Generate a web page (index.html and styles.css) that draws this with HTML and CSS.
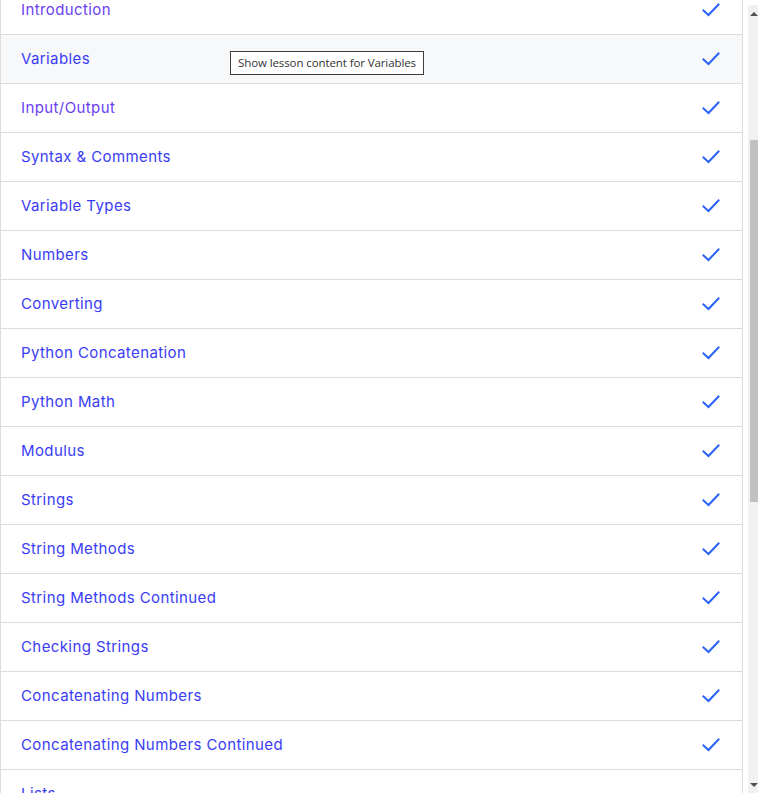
FILE: index.html
```html
<!DOCTYPE html>
<html>
<head>
<meta charset="utf-8">
<link rel="stylesheet" href="styles.css">
</head>
<body>
<div class="frame">
  <ul class="lessons">
    <li class="row"><a class="link visited" href="#">Introduction</a><svg class="check" viewBox="0 0 18 14"><path d="M1.5 7.5 L6.5 12 L16.5 1.5"/></svg></li>
    <li class="row hover"><a class="link" href="#">Variables</a><svg class="check" viewBox="0 0 18 14"><path d="M1.5 7.5 L6.5 12 L16.5 1.5"/></svg><span class="tooltip">Show lesson content for Variables</span></li>
    <li class="row"><a class="link visited" href="#">Input/Output</a><svg class="check" viewBox="0 0 18 14"><path d="M1.5 7.5 L6.5 12 L16.5 1.5"/></svg></li>
    <li class="row"><a class="link" href="#">Syntax &amp; Comments</a><svg class="check" viewBox="0 0 18 14"><path d="M1.5 7.5 L6.5 12 L16.5 1.5"/></svg></li>
    <li class="row"><a class="link" href="#">Variable Types</a><svg class="check" viewBox="0 0 18 14"><path d="M1.5 7.5 L6.5 12 L16.5 1.5"/></svg></li>
    <li class="row"><a class="link" href="#">Numbers</a><svg class="check" viewBox="0 0 18 14"><path d="M1.5 7.5 L6.5 12 L16.5 1.5"/></svg></li>
    <li class="row"><a class="link" href="#">Converting</a><svg class="check" viewBox="0 0 18 14"><path d="M1.5 7.5 L6.5 12 L16.5 1.5"/></svg></li>
    <li class="row"><a class="link" href="#">Python Concatenation</a><svg class="check" viewBox="0 0 18 14"><path d="M1.5 7.5 L6.5 12 L16.5 1.5"/></svg></li>
    <li class="row"><a class="link" href="#">Python Math</a><svg class="check" viewBox="0 0 18 14"><path d="M1.5 7.5 L6.5 12 L16.5 1.5"/></svg></li>
    <li class="row"><a class="link" href="#">Modulus</a><svg class="check" viewBox="0 0 18 14"><path d="M1.5 7.5 L6.5 12 L16.5 1.5"/></svg></li>
    <li class="row"><a class="link" href="#">Strings</a><svg class="check" viewBox="0 0 18 14"><path d="M1.5 7.5 L6.5 12 L16.5 1.5"/></svg></li>
    <li class="row"><a class="link" href="#">String Methods</a><svg class="check" viewBox="0 0 18 14"><path d="M1.5 7.5 L6.5 12 L16.5 1.5"/></svg></li>
    <li class="row"><a class="link" href="#">String Methods Continued</a><svg class="check" viewBox="0 0 18 14"><path d="M1.5 7.5 L6.5 12 L16.5 1.5"/></svg></li>
    <li class="row"><a class="link" href="#">Checking Strings</a><svg class="check" viewBox="0 0 18 14"><path d="M1.5 7.5 L6.5 12 L16.5 1.5"/></svg></li>
    <li class="row"><a class="link" href="#">Concatenating Numbers</a><svg class="check" viewBox="0 0 18 14"><path d="M1.5 7.5 L6.5 12 L16.5 1.5"/></svg></li>
    <li class="row"><a class="link" href="#">Concatenating Numbers Continued</a><svg class="check" viewBox="0 0 18 14"><path d="M1.5 7.5 L6.5 12 L16.5 1.5"/></svg></li>
    <li class="row"><a class="link" href="#">Lists</a></li>
  </ul>
  <div class="scrollbar">
    <span class="arrow up"></span>
    <div class="thumb"></div>
    <span class="arrow down"></span>
  </div>
</div>
</body>
</html>
```

FILE: styles.css
```css
html, body {
  margin: 0;
  padding: 0;
  height: 793px;
  overflow: hidden;
  background: #ffffff;
}

.frame {
  display: flex;
  height: 793px;
}

.lessons {
  list-style: none;
  margin: -15px 0 0 0;
  padding: 0;
  width: 741px;
  border-left: 1px solid #dcdcdc;
  border-right: 1px solid #dcdcdc;
  flex: none;
}

.row {
  position: relative;
  display: flex;
  align-items: center;
  justify-content: space-between;
  height: 47px;
  padding: 0 22px 1px 20px;
  border-top: 1px solid #dcdcdc;
  box-sizing: content-box;
}

.row.hover {
  background: #f7f8fa;
}

.link {
  font-family: "Inter", "Lato", sans-serif;
  font-size: 15px;
  color: #3a3cf6;
  text-decoration: none;
  letter-spacing: 0.4px;
}

.link.visited {
  color: #6a40f2;
}

.check {
  width: 18px;
  height: 14px;
  margin-top: 1px;
  fill: none;
  stroke: #2b63f6;
  stroke-width: 2;
  stroke-linecap: square;
}

.tooltip {
  position: absolute;
  left: 229px;
  top: 16px;
  padding: 3px 7px;
  background: #ffffff;
  border: 1px solid #3c3c3c;
  font-family: "Open Sans", "Noto Sans", sans-serif;
  font-size: 11.5px;
  letter-spacing: -0.1px;
  line-height: 16px;
  color: #333333;
  white-space: nowrap;
}

.scrollbar {
  margin: 5px 0 0 5px;
  width: 11px;
  flex: none;
  background: #f1f1f1;
  display: flex;
  flex-direction: column;
  align-items: center;
  position: relative;
}

.arrow {
  width: 0;
  height: 0;
  border-left: 4px solid transparent;
  border-right: 4px solid transparent;
}

.arrow.up {
  margin-top: 7px;
  border-bottom: 4px solid #505050;
}

.arrow.down {
  margin-top: auto;
  margin-bottom: 6px;
  border-top: 4px solid #505050;
}

.thumb {
  margin-top: 124px;
  width: 9px;
  height: 362px;
  margin-left: 2px;
  background: #c1c1c1;
}
```
